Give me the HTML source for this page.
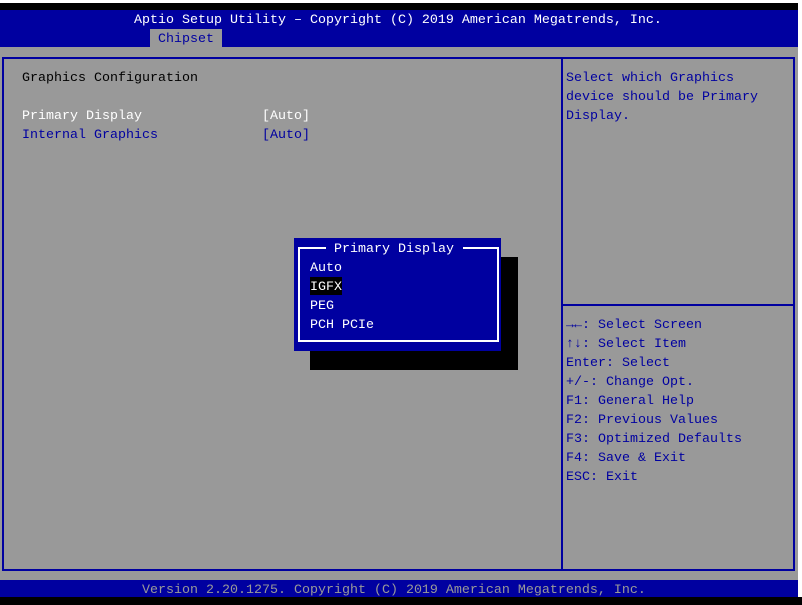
<!DOCTYPE html>
<html><head><style>
*{margin:0;padding:0;box-sizing:border-box}
body{width:802px;height:605px;background:#fff;position:relative;overflow:hidden;font-family:"Liberation Mono","DejaVu Sans Mono",monospace;font-size:13.33px;line-height:19px}
.a{position:absolute;white-space:pre}
.w{color:#fff}.b{color:#0000a0}.g{color:#999}
</style></head><body>
<div class="a" style="left:0;top:3px;width:798px;height:7px;background:#000"></div>
<div class="a" style="left:0;top:10px;width:798px;height:37px;background:#0000a0"></div>
<div class="a" style="left:0;top:47px;width:798px;height:533px;background:#999"></div>
<div class="a" style="left:0;top:580px;width:798px;height:17px;background:#0000a0"></div>
<div class="a" style="left:0;top:597px;width:802px;height:8px;background:#000"></div>
<div class="a w" style="left:134px;top:11px">Aptio Setup Utility – Copyright (C) 2019 American Megatrends, Inc.</div>
<div class="a" style="left:150px;top:29px;width:72px;height:18px;background:#999;color:#0000a0;padding-left:8px;padding-top:1px;line-height:19px">Chipset</div>
<div class="a" style="left:2px;top:57px;width:793px;height:514px;border:2px solid #0000a0"></div>
<div class="a" style="left:561px;top:57px;width:2px;height:514px;background:#0000a0"></div>
<div class="a" style="left:563px;top:304px;width:232px;height:2px;background:#0000a0"></div>
<div class="a" style="left:22px;top:69px;color:#000">Graphics Configuration</div>
<div class="a w" style="left:22px;top:107px">Primary Display</div>
<div class="a w" style="left:262px;top:107px">[Auto]</div>
<div class="a b" style="left:22px;top:126px">Internal Graphics</div>
<div class="a b" style="left:262px;top:126px">[Auto]</div>
<div class="a b" style="left:566px;top:69px">Select which Graphics
device should be Primary
Display.</div>
<div class="a b" style="left:566px;top:316px">→←: Select Screen
↑↓: Select Item
Enter: Select
+/-: Change Opt.
F1: General Help
F2: Previous Values
F3: Optimized Defaults
F4: Save &amp; Exit
ESC: Exit</div>
<div class="a" style="left:310px;top:257px;width:208px;height:113px;background:#000"></div>
<div class="a" style="left:294px;top:238px;width:207px;height:113px;background:#0000a0"></div>
<div class="a" style="left:298px;top:247px;width:201px;height:95px;border:2px solid #fff;border-top:none"></div>
<div class="a" style="left:298px;top:247px;width:28px;height:2px;background:#fff"></div>
<div class="a" style="left:463px;top:247px;width:36px;height:2px;background:#fff"></div>
<div class="a w" style="left:334px;top:240px">Primary Display</div>
<div class="a" style="left:310px;top:277px;width:32px;height:18px;background:#000"></div>
<div class="a w" style="left:310px;top:259px">Auto
IGFX
PEG
PCH PCIe</div>
<div class="a g" style="left:142px;top:581px;line-height:19px">Version 2.20.1275. Copyright (C) 2019 American Megatrends, Inc.</div>
</body></html>
